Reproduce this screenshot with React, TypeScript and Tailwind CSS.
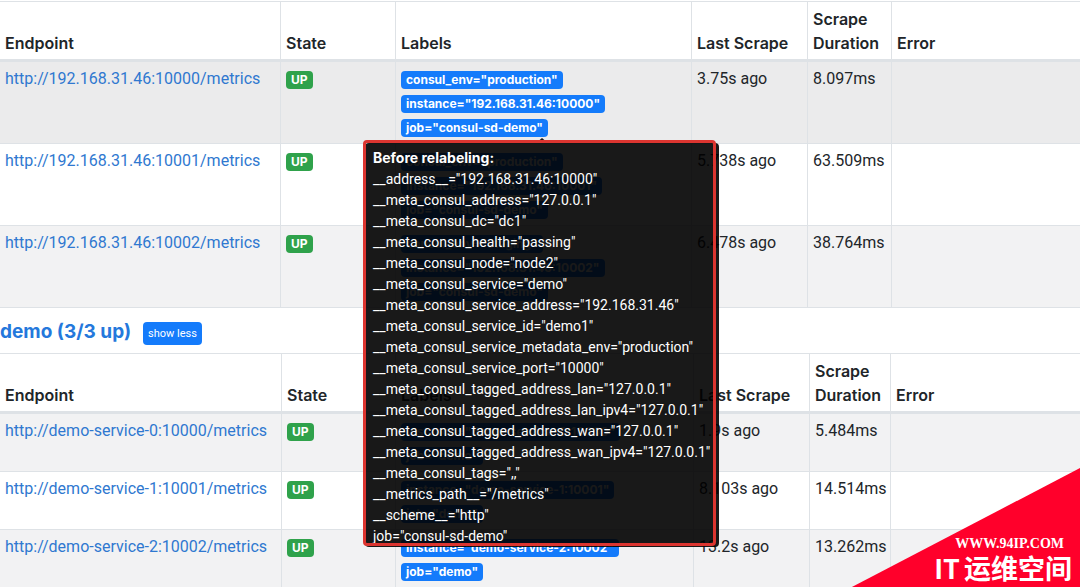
import React from "react";

type Target = {
  endpoint: string;
  labels: string[];
  lastScrape: string;
  duration: string;
  highlighted?: boolean;
  discovered?: string[];
};

const consulTargets: Target[] = [
  {
    endpoint: "http://192.168.31.46:10000/metrics",
    labels: ['consul_env="production"', 'instance="192.168.31.46:10000"', 'job="consul-sd-demo"'],
    lastScrape: "3.75s ago",
    duration: "8.097ms",
    highlighted: true,
    discovered: [
      '__address__="192.168.31.46:10000"',
      '__meta_consul_address="127.0.0.1"',
      '__meta_consul_dc="dc1"',
      '__meta_consul_health="passing"',
      '__meta_consul_node="node2"',
      '__meta_consul_service="demo"',
      '__meta_consul_service_address="192.168.31.46"',
      '__meta_consul_service_id="demo1"',
      '__meta_consul_service_metadata_env="production"',
      '__meta_consul_service_port="10000"',
      '__meta_consul_tagged_address_lan="127.0.0.1"',
      '__meta_consul_tagged_address_lan_ipv4="127.0.0.1"',
      '__meta_consul_tagged_address_wan="127.0.0.1"',
      '__meta_consul_tagged_address_wan_ipv4="127.0.0.1"',
      '__meta_consul_tags=",,"',
      '__metrics_path__="/metrics"',
      '__scheme__="http"',
      'job="consul-sd-demo"',
    ],
  },
  {
    endpoint: "http://192.168.31.46:10001/metrics",
    labels: ['consul_env="production"', 'instance="192.168.31.46:10001"', 'job="consul-sd-demo"'],
    lastScrape: "5.738s ago",
    duration: "63.509ms",
  },
  {
    endpoint: "http://192.168.31.46:10002/metrics",
    labels: ['consul_env="staging"', 'instance="192.168.31.46:10002"', 'job="consul-sd-demo"'],
    lastScrape: "6.478s ago",
    duration: "38.764ms",
  },
];

const demoTargets: Target[] = [
  {
    endpoint: "http://demo-service-0:10000/metrics",
    labels: ['instance="demo-service-0:10000"', 'job="demo"'],
    lastScrape: "1.9s ago",
    duration: "5.484ms",
  },
  {
    endpoint: "http://demo-service-1:10001/metrics",
    labels: ['instance="demo-service-1:10001"', 'job="demo"'],
    lastScrape: "8.103s ago",
    duration: "14.514ms",
  },
  {
    endpoint: "http://demo-service-2:10002/metrics",
    labels: ['instance="demo-service-2:10002"', 'job="demo"'],
    lastScrape: "13.2s ago",
    duration: "13.262ms",
  },
];

const consulColumns = ["w-[281px]", "w-[115px]", "w-[296px]", "w-[116px]", "w-[84px]", "w-auto"];
const demoColumns = ["w-[282px]", "w-[114px]", "w-[298px]", "w-[116px]", "w-[81px]", "w-auto"];
const headings = ["Endpoint", "State", "Labels", "Last Scrape", "Scrape Duration", "Error"];

function Badge({ tone, children }: { tone: string; children: React.ReactNode }) {
  return (
    <span className={`mt-1 inline-block rounded px-[5px] py-[3px] align-top font-['Inter',sans-serif] text-xs leading-3 font-bold whitespace-nowrap text-white ${tone}`}>
      {children}
    </span>
  );
}

function LabelsTooltip({ lines }: { lines: string[] }) {
  return (
    <div role="tooltip" className="absolute top-[71px] -left-9 z-10 w-[354px]">
      <div className="mx-auto h-0 w-0 border-x-[6px] border-b-[5px] border-x-transparent border-b-black/90" />
      <div className="rounded bg-black/90 pt-1 pr-1 pb-0 pl-2 text-sm leading-[21px] whitespace-nowrap text-white">
        <b className="font-['Inter',sans-serif]">Before relabeling:</b>
        {lines.map((line) => (
          <div key={line}>{line}</div>
        ))}
      </div>
      <div className="absolute top-[2px] right-[3px] bottom-px -left-[2px] rounded border-[3px] border-[#dc3530]" />
    </div>
  );
}

function TargetTable({ targets, columns }: { targets: Target[]; columns: string[] }) {
  const cell = "border-t border-r border-[#dee2e6] px-[5px] pt-[5px] pb-1 align-top last:border-r-0";
  return (
    <table className="w-full table-fixed border-separate border-spacing-0 border-b border-[#dee2e6] text-left">
      <colgroup>
        {columns.map((width, i) => (
          <col key={i} className={width} />
        ))}
      </colgroup>
      <thead>
        <tr>
          {headings.map((heading) => (
            <th
              key={heading}
              scope="col"
              className="border-t border-r border-b-2 border-[#dee2e6] px-[5px] pt-[5px] pb-1 align-bottom font-['Inter',sans-serif] font-semibold last:border-r-0"
            >
              {heading}
            </th>
          ))}
        </tr>
      </thead>
      <tbody className="font-['Roboto',sans-serif]">
        {targets.map((target) => (
          <tr key={target.endpoint} className={target.highlighted ? "bg-[#ebebec]" : "odd:bg-[#f2f2f3]"}>
            <td className={cell}>
              <a href={target.endpoint} className="whitespace-nowrap text-[#2f78d0]">
                {target.endpoint}
              </a>
            </td>
            <td className={cell}>
              <Badge tone="bg-[#2fa24b]">UP</Badge>
            </td>
            <td className={cell}>
              <div className="relative">
                {target.labels.map((label) => (
                  <div key={label} className="h-6">
                    <Badge tone="bg-[#147bfb]">{label}</Badge>
                  </div>
                ))}
                {target.discovered && <LabelsTooltip lines={target.discovered} />}
              </div>
            </td>
            <td className={cell}>{target.lastScrape}</td>
            <td className={cell}>{target.duration}</td>
            <td className={cell} />
          </tr>
        ))}
      </tbody>
    </table>
  );
}

export default function App() {
  return (
    <main className="relative min-h-screen overflow-hidden bg-white pt-px font-['Inter','Noto_Sans_CJK_SC',sans-serif] text-base leading-6 text-[#212529]">
      <TargetTable targets={consulTargets} columns={consulColumns} />
      <section>
        <div className="flex h-[45px] items-center gap-3 pt-0.5">
          <h2 className="text-[19px] font-bold">
            <a href="#demo" className="text-[#2478dc]">
              demo (3/3 up)
            </a>
          </h2>
          <button type="button" className="mt-1 rounded bg-[#147bfb] px-[5px] py-1 font-['Roboto',sans-serif] text-[11px] leading-[15px] text-white">
            show less
          </button>
        </div>
        <TargetTable targets={demoTargets} columns={demoColumns} />
      </section>
      <aside className="absolute right-0 bottom-0 z-20 flex h-[120px] w-[230px] flex-col items-end justify-end text-white">
        <svg viewBox="0 0 230 120" className="absolute inset-0 h-full w-full" aria-hidden="true">
          <path d="M0 120L230 0V120Z" fill="#ff002b" />
        </svg>
        <span className="relative pr-4 font-['Liberation_Serif',serif] text-sm leading-4 font-bold">WWW.94IP.COM</span>
        <span className="relative flex gap-1 pr-2 pb-1 font-['Noto_Sans_CJK_SC',sans-serif] text-[27px] leading-8 font-bold">
          <span>IT</span>
          <span>运维空间</span>
        </span>
      </aside>
    </main>
  );
}
